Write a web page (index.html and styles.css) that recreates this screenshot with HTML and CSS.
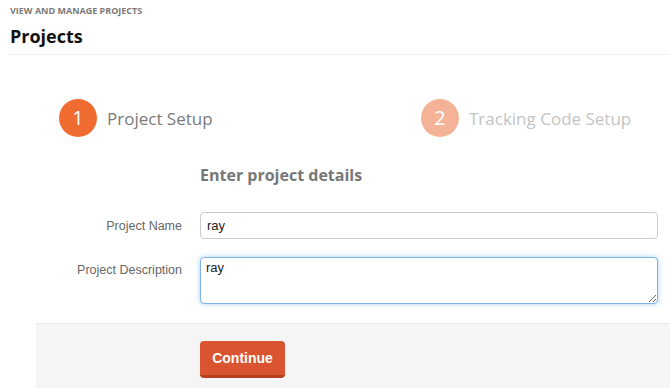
FILE: index.html
```html
<!DOCTYPE html>
<html lang="en">
<head>
    <meta charset="UTF-8">
    <title>Projects</title>
    <link rel="stylesheet" href="styles.css">
</head>
<body>
    <!-- header -->
    <div class="page-header">
        <div class="crumb">VIEW AND MANAGE PROJECTS</div>
        <h1>Projects</h1>
    </div>

    <div class="wizard">
        <!-- steps -->
        <div class="steps">
            <div class="step active">
                <span class="num">1</span>
                <span class="label">Project Setup</span>
            </div>
            <div class="step">
                <span class="num">2</span>
                <span class="label">Tracking Code Setup</span>
            </div>
        </div>

        <form class="form">
            <div></div>
            <h2>Enter project details</h2>

            <label for="name">Project Name</label>
            <input id="name" type="text" value="ray">

            <label for="desc">Project Description</label>
            <textarea id="desc" class="focus">ray</textarea>
        </form>

        <div class="actions">
            <button type="button" class="btn">Continue</button>
        </div>
    </div>
</body>
</html>
```

FILE: styles.css
```css
body {
    margin: 0;
    background: #fff;
    font-family: "Open Sans", "Liberation Sans", sans-serif;
    overflow: hidden;
}

.page-header {
    margin: 0 0 0 8px;
    padding: 4px 2px 6px;
    border-bottom: 1px solid #eeeeee;
}

.crumb {
    font-size: 9px;
    font-weight: 700;
    color: #7a7a7a;
    line-height: 14px;
}

h1 {
    margin: 6px 0 0;
    font-size: 18px;
    font-weight: 700;
    color: #111;
    line-height: 24px;
}

.wizard {
    margin-left: 36px;
}

.steps {
    display: flex;
    padding: 44px 0 0 23px;
}

.step {
    display: flex;
    align-items: center;
    flex-shrink: 0;
}

.step.active {
    width: 362px;
}

.num {
    width: 38px;
    height: 38px;
    border-radius: 50%;
    background: #f4b396;
    color: #fff;
    font-size: 20px;
    line-height: 38px;
    text-align: center;
    margin-right: 10px;
}

.label {
    font-size: 17px;
    color: #c4c4c4;
    white-space: nowrap;
}

.step.active .num {
    background: #ef6b30;
}

.step.active .label {
    color: #7a7a7a;
}

.form {
    display: grid;
    grid-template-columns: 146px 1fr;
    column-gap: 18px;
    row-gap: 18px;
    align-items: center;
    padding: 25px 12px 19px 0;
}

h2 {
    margin: 0 0 6px;
    font-size: 16px;
    font-weight: 700;
    color: #777;
    line-height: 26px;
}

label {
    text-align: right;
    font-family: "Liberation Sans", Arial, sans-serif;
    font-size: 12.5px;
    color: #666;
}

label[for="desc"] {
    align-self: start;
    padding-top: 6px;
}

input,
textarea {
    box-sizing: border-box;
    width: 100%;
    margin: 0;
    font-family: "Liberation Sans", Arial, sans-serif;
    font-size: 13px;
    color: #222;
    border: 1px solid #cccccc;
    border-radius: 4px;
    padding: 4px 6px;
    background: #fff;
}

input {
    height: 27px;
}

textarea {
    height: 47px;
    resize: vertical;
    padding: 2px 5px;
}

textarea.focus {
    border-color: #7fb6e6;
    box-shadow: 0 0 5px rgba(102, 175, 233, 0.6);
    outline: none;
}

.actions {
    background: #f5f5f5;
    border-top: 1px solid #e8e8e8;
    padding: 17px 0 11px 164px;
}

.btn {
    font-family: "Liberation Sans", Arial, sans-serif;
    font-size: 14px;
    font-weight: 700;
    color: #fff;
    background: #d9542f;
    border: none;
    border-bottom: 3px solid #b9401f;
    border-radius: 4px;
    width: 85px;
    height: 37px;
    padding: 0;
}
```
